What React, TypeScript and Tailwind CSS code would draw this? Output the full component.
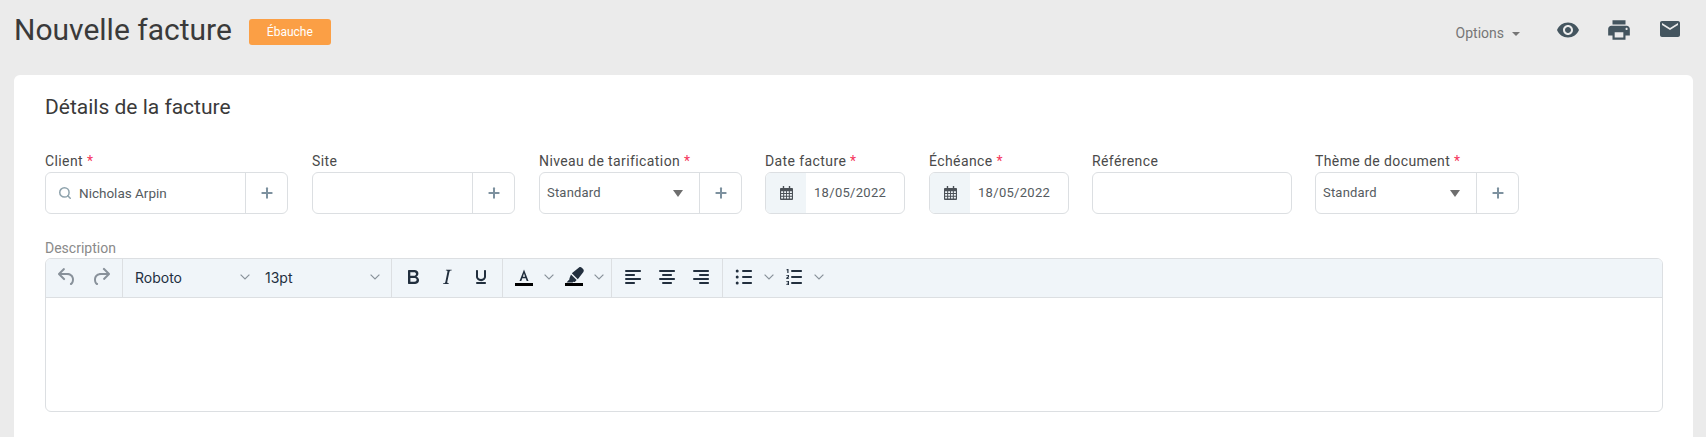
import React from 'react';
import { Search, Plus } from 'lucide-react';
import { MdVisibility, MdLocalPrintshop, MdEmail } from 'react-icons/md';

const Chevron = ({ className = '' }: { className?: string }) => (
  <svg width="10" height="6" viewBox="0 0 10 6" className={className}>
    <path d="M.6.6 5 5 9.4.6" fill="none" stroke="#8b949c" strokeWidth="1.2" />
  </svg>
);

const TinyIcon = ({ d, fill = '#222f3e' }: { d: string; fill?: string }) => (
  <svg width="24" height="24" viewBox="0 0 24 24">
    <path d={d} fill={fill} fillRule="evenodd" />
  </svg>
);

const icons = {
  undo: 'M6.4 8H12c3.7 0 6.2 2 6.8 5.1.6 2.7-.4 5.6-2.3 6.8a1 1 0 0 1-1-1.8c1.1-.6 1.8-2.7 1.4-4.6-.5-2.1-2.1-3.5-4.9-3.5H6.4l3.3 3.3a1 1 0 1 1-1.4 1.4l-5-5a1 1 0 0 1 0-1.4l5-5a1 1 0 0 1 1.4 1.4L6.4 8z',
  redo: 'M17.6 10H12c-2.8 0-4.4 1.4-4.9 3.5-.4 2 .3 4 1.4 4.6a1 1 0 1 1-1 1.8c-2-1.2-2.9-4.1-2.3-6.8.6-3 3-5.1 6.8-5.1h5.6l-3.3-3.3a1 1 0 1 1 1.4-1.4l5 5a1 1 0 0 1 0 1.4l-5 5a1 1 0 0 1-1.4-1.4l3.3-3.3z',
  bold: 'M7.8 19c-.3 0-.5 0-.6-.2l-.2-.5V5.7c0-.2 0-.4.2-.5l.6-.2h5c1.5 0 2.7.3 3.5 1 .7.6 1.1 1.4 1.1 2.5a3 3 0 0 1-.6 1.9c-.4.6-1 1-1.6 1.2.4.1.9.3 1.3.6s.8.7 1 1.2c.4.4.5 1 .5 1.6 0 1.3-.4 2.3-1.3 3-.8.7-2.1 1-3.8 1H7.8zm5-8.3c.6 0 1.2-.1 1.6-.5.4-.3.6-.7.6-1.3 0-1.1-.8-1.7-2.3-1.7H9.3v3.5h3.4zm.5 6c.7 0 1.3-.1 1.7-.4.4-.4.6-.9.6-1.5s-.2-1-.7-1.4c-.4-.3-1-.4-2-.4H9.4v3.8h4z',
  italic: 'M16.7 4.7l-.1.9h-.3c-.6 0-1 0-1.4.3-.3.3-.4.6-.5 1.1l-2.1 9.8v.6c0 .5.4.8 1.4.8h.2l-.2.8H8l.2-.8h.2c1.1 0 1.8-.5 2-1.5l2-9.8.1-.5c0-.6-.4-.8-1.4-.8h-.3l.2-.9h5.8z',
  underline: 'M16 5c.6 0 1 .4 1 1v5.5a4 4 0 0 1-.4 1.8l-1 1.4a5.3 5.3 0 0 1-5.5 1 5 5 0 0 1-1.6-1c-.5-.4-.8-.9-1.1-1.4a4 4 0 0 1-.4-1.8V6c0-.6.4-1 1-1s1 .4 1 1v5.5c0 .3 0 .6.2 1l.6.7a3.3 3.3 0 0 0 2.2.8 3.4 3.4 0 0 0 2.2-.8c.3-.2.4-.5.6-.8l.2-.9V6c0-.6.4-1 1-1zM8 17h8c.6 0 1 .4 1 1s-.4 1-1 1H8a1 1 0 0 1 0-2z',
  left: 'M5 5h14c.6 0 1 .4 1 1s-.4 1-1 1H5a1 1 0 1 1 0-2zm0 4h8c.6 0 1 .4 1 1s-.4 1-1 1H5a1 1 0 1 1 0-2zm0 8h8c.6 0 1 .4 1 1s-.4 1-1 1H5a1 1 0 0 1 0-2zm0-4h14c.6 0 1 .4 1 1s-.4 1-1 1H5a1 1 0 0 1 0-2z',
  center: 'M5 5h14c.6 0 1 .4 1 1s-.4 1-1 1H5a1 1 0 1 1 0-2zm3 4h8c.6 0 1 .4 1 1s-.4 1-1 1H8a1 1 0 1 1 0-2zm0 8h8c.6 0 1 .4 1 1s-.4 1-1 1H8a1 1 0 0 1 0-2zm-3-4h14c.6 0 1 .4 1 1s-.4 1-1 1H5a1 1 0 0 1 0-2z',
  right: 'M5 5h14c.6 0 1 .4 1 1s-.4 1-1 1H5a1 1 0 1 1 0-2zm6 4h8c.6 0 1 .4 1 1s-.4 1-1 1h-8a1 1 0 0 1 0-2zm0 8h8c.6 0 1 .4 1 1s-.4 1-1 1h-8a1 1 0 0 1 0-2zm-6-4h14c.6 0 1 .4 1 1s-.4 1-1 1H5a1 1 0 0 1 0-2z',
  bullist: 'M11 5h8c.6 0 1 .4 1 1s-.4 1-1 1h-8a1 1 0 0 1 0-2zm0 6h8c.6 0 1 .4 1 1s-.4 1-1 1h-8a1 1 0 0 1 0-2zm0 6h8c.6 0 1 .4 1 1s-.4 1-1 1h-8a1 1 0 0 1 0-2zM3.700 6a1.500 1.500 0 1 1 3 0 1.500 1.500 0 0 1-3 0zm0 6a1.500 1.500 0 1 1 3 0 1.500 1.500 0 0 1-3 0zm0 6a1.500 1.500 0 1 1 3 0 1.500 1.500 0 0 1-3 0z',
  numlist: 'M10 17h9c.6 0 1 .4 1 1s-.4 1-1 1h-9a1 1 0 0 1 0-2zm0-6h9c.6 0 1 .4 1 1s-.4 1-1 1h-9a1 1 0 0 1 0-2zm0-6h9c.6 0 1 .4 1 1s-.4 1-1 1h-9a1 1 0 1 1 0-2zM6.500 4v4h-1.200V5.200h-.9v-.7L5.500 4h1zM4.300 10h2.700v2.200l-1.500 1h1.500v.8H4.300v-1.300l1.600-1.100v-.8H4.300V10zm0 6h2.700v4H4.300v-.8h1.600v-.8H4.800v-.7h1.100v-.9H4.300V16z',
};

const Label = ({ text, required, className = '' }: { text: string; required?: boolean; className?: string }) => (
  <label className={`block text-[14px] leading-[20px] tracking-[0.4px] text-[#4a4a4a] mb-[1px] ${className}`}>
    {text}
    {required && <span className="text-[#f5365c]"> *</span>}
  </label>
);

const AddButton = () => (
  <div className="w-[42px] shrink-0 flex items-center justify-center border-l border-[#dcdfe2]">
    <Plus size={16} strokeWidth={3} color="#7d919f" />
  </div>
);

const Box = ({ children, className = '' }: { children?: React.ReactNode; className?: string }) => (
  <div className={`flex h-[42px] border border-[#dcdfe2] rounded-[6px] overflow-hidden bg-white ${className}`}>
    {children}
  </div>
);

const SelectField = ({ label, width }: { label: string; width: string }) => (
  <div className={width}>
    <Label text={label} required />
    <Box>
      <div className="flex-1 flex items-center justify-between pl-[7px] pr-[16px] text-[13px] text-[#555b60] tracking-[0.2px]">
        <span>Standard</span>
        <span className="w-0 h-0 border-x-[5.5px] border-x-transparent border-t-[7px] border-t-[#6e6e6e]" />
      </div>
      <AddButton />
    </Box>
  </div>
);

const CalendarIcon = () => (
  <svg width="13" height="14" viewBox="0 0 14 15">
    <path
      d="M3 0h1.500v2H3zM9.500 0H11v2H9.500zM1 2h12a1 1 0 0 1 1 1v11a1 1 0 0 1-1 1H1a1 1 0 0 1-1-1V3a1 1 0 0 1 1-1zm.2 3.500v2h2.200v-2zm3.300 0v2h2v-2zm3 0v2h2v-2zm3.100 0v2h2.200v-2zM1.200 8.500v2h2.200v-2zm3.300 0v2h2v-2zm3 0v2h2v-2zm3.100 0v2h2.200v-2zM1.200 11.500v2h2.200v-2zm3.300 0v2h2v-2zm3 0v2h2v-2zm3.100 0v2h2.200v-2z"
      fill="#4b5157"
      fillRule="evenodd"
    />
  </svg>
);

const DateField = ({ label, width }: { label: string; width: string }) => (
  <div className={width}>
    <Label text={label} required />
    <Box>
      <div className="w-[40px] bg-[#f0f5f8] flex items-center justify-center shrink-0">
        <CalendarIcon />
      </div>
      <div className="flex-1 flex items-center pl-[8px] text-[13px] text-[#555b60] tracking-[0.3px]">18/05/2022</div>
    </Box>
  </div>
);

const ToolButton = ({ children, muted }: { children: React.ReactNode; muted?: boolean }) => (
  <div className={`w-[34px] h-[34px] flex items-center justify-center ${muted ? 'opacity-50' : ''}`}>{children}</div>
);

const Caret = () => (
  <div className="w-[16px] h-[34px] flex items-center justify-center">
    <Chevron />
  </div>
);

const Group = ({ children, className = '' }: { children: React.ReactNode; className?: string }) => (
  <div className={`flex items-center h-full px-[4px] pb-[2px] border-r border-[#dcdfe2] ${className}`}>{children}</div>
);

const FontSelect = ({ text }: { text: string }) => (
  <div className="w-[130px] h-[34px] flex items-center justify-between pl-[10px] pr-[5px] text-[14px] text-[#222f3e]">
    <span>{text}</span>
    <Chevron />
  </div>
);

const Toolbar = () => (
  <div className="flex items-center h-[39px] bg-[#f0f5f9] border-b border-[#dcdfe2] font-['Inter',sans-serif]">
    <Group>
      <ToolButton muted><TinyIcon d={icons.undo} /></ToolButton>
      <ToolButton muted><TinyIcon d={icons.redo} /></ToolButton>
    </Group>
    <Group className="pl-[2px] pr-[6px]">
      <FontSelect text="Roboto" />
      <FontSelect text="13pt" />
    </Group>
    <Group>
      <ToolButton><TinyIcon d={icons.bold} /></ToolButton>
      <ToolButton><TinyIcon d={icons.italic} /></ToolButton>
      <ToolButton><TinyIcon d={icons.underline} /></ToolButton>
    </Group>
    <Group>
      <ToolButton>
        <svg width="24" height="24" viewBox="0 0 24 24">
          <path d="M3 18h18v3H3z" fill="#000" />
          <path d="M12 4.500 7.500 16h1.800l1-2.800h3.400l1 2.800h1.800L12 4.500zm-1.100 7.200L12 8.400l1.100 3.300h-2.200z" fill="#222f3e" fillRule="evenodd" />
        </svg>
      </ToolButton>
      <Caret />
      <ToolButton>
        <svg width="24" height="24" viewBox="0 0 24 24">
          <path d="M3 18h18v3H3z" fill="#000" />
          <path d="M17 2.500c.9-.6 2-.5 2.800.3l1.300 1.300c.8.800.9 1.900.3 2.800l-5.600 7.300-6-6L17 2.500zM9 9.500l5.600 5.600-1.300 1.300c-.6.500-1.300.6-2 .4l-.6.700H4.500l3-3.200c-.2-.7-.1-1.400.4-2L9 9.500z" fill="#222f3e" />
        </svg>
      </ToolButton>
      <Caret />
    </Group>
    <Group>
      <ToolButton><TinyIcon d={icons.left} /></ToolButton>
      <ToolButton><TinyIcon d={icons.center} /></ToolButton>
      <ToolButton><TinyIcon d={icons.right} /></ToolButton>
    </Group>
    <div className="flex items-center h-full px-[4px] pb-[2px]">
      <ToolButton><TinyIcon d={icons.bullist} /></ToolButton>
      <Caret />
      <ToolButton><TinyIcon d={icons.numlist} /></ToolButton>
      <Caret />
    </div>
  </div>
);

export default function App() {
  return (
    <div className="h-[437px] overflow-hidden bg-[#ebebeb] pl-[14px] pr-[13px] font-['Roboto',sans-serif]">
      <header className="h-[75px] flex items-start">
        <h1 className="mt-[10px] text-[30px] leading-[40px] text-[#3a3a3a]">Nouvelle facture</h1>
        <span className="ml-[17px] mt-[19px] w-[82px] h-[26px] flex items-center justify-center rounded-[3px] bg-[#fb9f45] text-white text-[12px]">
          Ébauche
        </span>
        <div className="ml-auto flex items-center h-[60px]">
          <span className="mt-[6px] text-[14px] text-[#767676]">Options</span>
          <span className="ml-[8px] mt-[8px] w-0 h-0 border-x-[4px] border-x-transparent border-t-[4px] border-t-[#767676]" />
          <MdVisibility size={24} color="#44555f" className="ml-[36px]" />
          <MdLocalPrintshop size={26} color="#44555f" className="ml-[26px]" />
          <MdEmail size={24} color="#44555f" className="ml-[26px] mr-[11px] -mt-[2px]" />
        </div>
      </header>

      <main className="bg-white rounded-t-[6px] h-[362px] pl-[31px] pr-[30px] pt-[19px]">
        <h2 className="text-[21px] leading-[26px] text-[#3a3a3a]">Détails de la facture</h2>

        <div className="mt-[31px] flex gap-[24px]">
          <div className="w-[243px]">
            <Label text="Client" required />
            <Box>
              <div className="flex-1 flex items-center pl-[12px] text-[13.5px] text-[#555b60]">
                <Search size={14} strokeWidth={2.6} color="#8fa3ad" className="mr-[7px]" />
                Nicholas Arpin
              </div>
              <AddButton />
            </Box>
          </div>
          <div className="w-[203px]">
            <Label text="Site" />
            <Box>
              <div className="flex-1" />
              <AddButton />
            </Box>
          </div>
          <SelectField label="Niveau de tarification" width="w-[203px]" />
          <DateField label="Date facture" width="w-[140px] -ml-px" />
          <DateField label="Échéance" width="w-[140px]" />
          <div className="w-[200px] -ml-px">
            <Label text="Référence" />
            <Box />
          </div>
          <SelectField label="Thème de document" width="w-[204px] -ml-px" />
        </div>

        <div className="mt-[24px] text-[14px] leading-[20px] text-[#8a8a8a]">Description</div>
        <div className="h-[154px] border border-[#dcdfe2] rounded-[6px] overflow-hidden">
          <Toolbar />
        </div>
      </main>
    </div>
  );
}
